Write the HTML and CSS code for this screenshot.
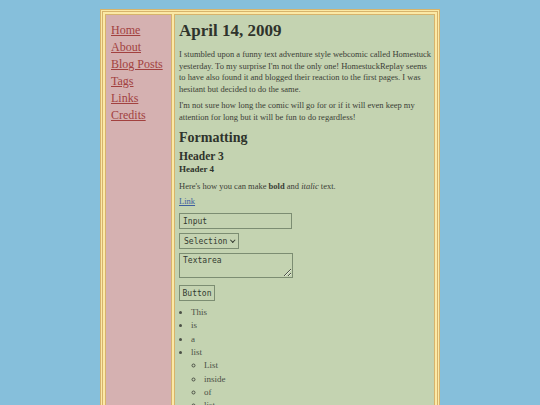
FILE: index.html
```html
<!DOCTYPE html>
<html lang="en">
<head>
<meta charset="utf-8">
<title>April 14, 2009</title>
<link rel="stylesheet" href="styles.css">
</head>
<body>
<div class="frame">
  <nav class="sidebar">
    <a href="#">Home</a>
    <a href="#">About</a>
    <a href="#">Blog Posts</a>
    <a href="#">Tags</a>
    <a href="#">Links</a>
    <a href="#">Credits</a>
  </nav>
  <main class="main">
    <h1>April 14, 2009</h1>
    <p>I stumbled upon a funny text adventure style webcomic called Homestuck yesterday. To my surprise I'm not the only one! HomestuckReplay seems to have also found it and blogged their reaction to the first pages. I was hesitant but decided to do the same.</p>
    <p>I'm not sure how long the comic will go for or if it will even keep my attention for long but it will be fun to do regardless!</p>
    <h2>Formatting</h2>
    <h3>Header 3</h3>
    <h4>Header 4</h4>
    <p>Here's how you can make <b>bold</b> and <i>italic</i> text.</p>
    <p><a class="link" href="#">Link</a></p>
    <div class="controls">
      <input class="field" type="text" value="Input">
      <span class="selwrap"><select class="select"><option>Selection</option></select></span>
      <textarea class="area">Textarea</textarea>
      <button class="btn" type="button">Button</button>
    </div>
    <ul class="list">
      <li>This</li>
      <li>is</li>
      <li>a</li>
      <li>list
        <ul class="sublist">
          <li>List</li>
          <li>inside</li>
          <li>of</li>
          <li>list</li>
        </ul>
      </li>
    </ul>
  </main>
</div>
</body>
</html>
```

FILE: styles.css
```css
html, body {
  margin: 0;
  padding: 0;
}
body {
  background: #86bfdb;
  font-family: "Liberation Serif", "Times New Roman", serif;
  color: #3b4036;
}
.frame {
  width: 340px;
  box-sizing: border-box;
  margin: 9px auto 0;
  border: 3px double #d7b36b;
  background: #fbe9a6;
  padding: 2px;
  display: flex;
  gap: 2px;
  min-height: 420px;
}
.sidebar {
  width: 67px;
  box-sizing: border-box;
  flex: none;
  background: #d5b1b1;
  border: 1px solid #d7b36b;
  padding: 7px 0 0 5px;
  display: flex;
  flex-direction: column;
}
.sidebar a {
  font-size: 12px;
  line-height: 17px;
  color: #a2413f;
  text-decoration: underline;
  white-space: nowrap;
}
.main {
  flex: 1;
  background: #c4d3b1;
  border: 1px solid #d7b36b;
  padding: 0 1px 0 4px;
}
h1 {
  font-size: 17px;
  line-height: 20px;
  margin: 6px 0 8px;
  color: #2f332c;
}
p {
  font-size: 8.5px;
  line-height: 11.7px;
  margin: 0 0 4px;
}
h2 {
  font-size: 14px;
  line-height: 17px;
  margin: 6px 0 2.5px;
  color: #2f332c;
}
h3 {
  font-size: 11.5px;
  line-height: 14px;
  margin: 0 0 1.5px;
  color: #2f332c;
}
h4 {
  font-size: 9px;
  line-height: 11px;
  margin: 0 0 5.5px;
  color: #2f332c;
}
.link {
  color: #3d5f9e;
}
.controls {
  margin-top: 5px;
  display: flex;
  flex-direction: column;
  align-items: flex-start;
  gap: 4px;
}
.field, .select, .area, .btn {
  font-family: "DejaVu Sans Mono", monospace;
  font-size: 8px;
  color: #333a30;
  background: transparent;
  border: 1px solid #7c8d72;
  box-sizing: border-box;
  margin: 0;
  border-radius: 0;
}
.field {
  width: 113px;
  height: 16px;
  padding: 0 3px;
}
.selwrap {
  position: relative;
  display: block;
  height: 16px;
}
.select {
  -webkit-appearance: none;
  appearance: none;
  width: 60px;
  height: 16px;
  padding: 0 0 0 4px;
  display: block;
}
.selwrap::after {
  content: "";
  position: absolute;
  left: 52px;
  top: 5px;
  width: 2.5px;
  height: 2.5px;
  border-right: 1px solid #333a30;
  border-bottom: 1px solid #333a30;
  transform: rotate(45deg);
  pointer-events: none;
}
.area {
  width: 114px;
  height: 25px;
  padding: 2px 3px;
  resize: both;
  display: block;
}
.btn {
  margin-top: 3px;
  width: 36px;
  height: 16px;
  padding: 0 2px;
}
.list {
  margin: 5px 0 0;
  padding-left: 12px;
  font-size: 9px;
  line-height: 13.3px;
  color: #4b5046;
}
.sublist {
  margin: 0;
  padding-left: 13px;
  list-style: circle;
  line-height: 13.3px;
}
```
